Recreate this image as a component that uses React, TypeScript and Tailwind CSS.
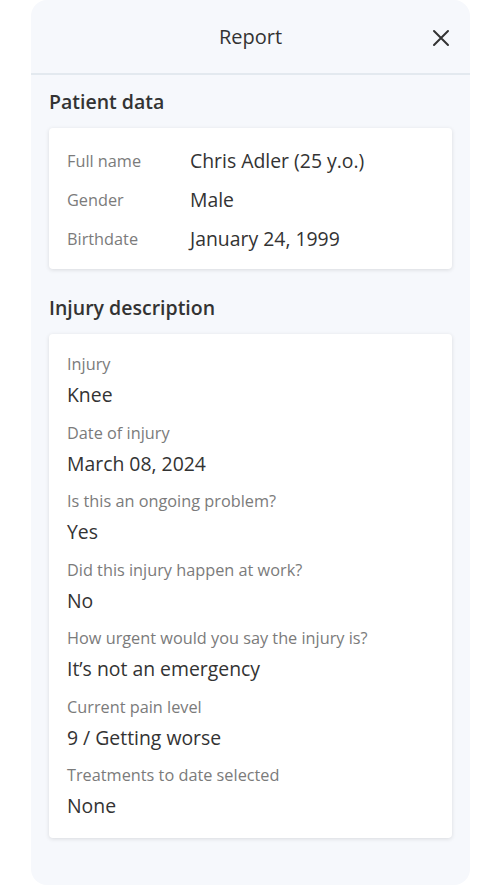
import React from "react";

const patient = [
  ["Full name", "Chris Adler (25 y.o.)"],
  ["Gender", "Male"],
  ["Birthdate", "January 24, 1999"],
];

const injury = [
  ["Injury", "Knee"],
  ["Date of injury", "March 08, 2024"],
  ["Is this an ongoing problem?", "Yes"],
  ["Did this injury happen at work?", "No"],
  ["How urgent would you say the injury is?", "It\u2019s not an emergency"],
  ["Current pain level", "9 / Getting worse"],
  ["Treatments to date selected", "None"],
];

export default function App() {
  return (
    <div className="w-[500px] h-[887px] bg-white" style={{ fontFamily: '"Open Sans", "Noto Sans", sans-serif' }}>
      <div className="ml-[31px] w-[439px] h-[885px] bg-[#f6f8fc] rounded-[16px] flex flex-col">
        <div className="relative h-[75px] flex items-center justify-center border-b-2 border-[#e3e9ef]">
          <span className="text-[20px] leading-[28px] font-medium text-[#333]">Report</span>
          <button className="absolute right-[20px] top-[29px] w-[18px] h-[18px] text-[#333]">
            <svg viewBox="0 0 18 18" width="18" height="18" fill="none" stroke="currentColor" strokeWidth="2" strokeLinecap="round">
              <path d="M2 2L16 16M16 2L2 16" />
            </svg>
          </button>
        </div>
        <div className="px-[18px] pt-[14px]">
          <div className="text-[19.5px] leading-[26px] font-semibold text-[#333]">Patient data</div>
          <div className="mt-[13px] bg-white rounded-[4px] shadow-[0_1px_4px_rgba(0,0,0,0.12)] pt-[19px] pb-[16px] px-[18px] flex flex-col gap-[11px]">
            {patient.map(([l, v]) => (
              <div key={l} className="flex items-center h-[28px]">
                <span className="w-[123px] text-[16.3px] text-[#7b7b7b]">{l}</span>
                <span className="text-[19.4px] text-[#333]">{v}</span>
              </div>
            ))}
          </div>
          <div className="mt-[26px] text-[19.5px] leading-[26px] font-semibold text-[#333]">Injury description</div>
          <div className="mt-[13px] bg-white rounded-[4px] shadow-[0_1px_4px_rgba(0,0,0,0.12)] pt-[19px] pb-[18px] px-[18px] flex flex-col gap-[12.5px]">
            {injury.map(([l, v]) => (
              <div key={l} className="flex flex-col">
                <span className="text-[16.3px] leading-[22px] text-[#7b7b7b]">{l}</span>
                <span className="mt-[6px] text-[19.4px] leading-[28px] text-[#333]">{v}</span>
              </div>
            ))}
          </div>
        </div>
      </div>
    </div>
  );
}
